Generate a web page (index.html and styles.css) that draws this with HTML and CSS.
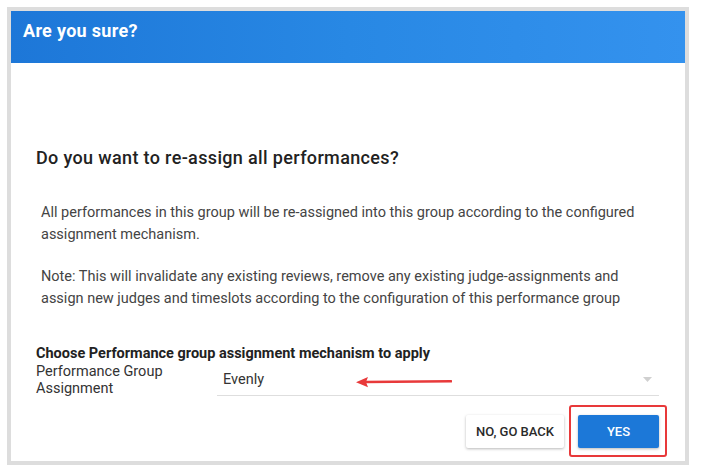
FILE: index.html
```html
<!DOCTYPE html>
<html>
<head>
<meta charset="utf-8">
<link rel="stylesheet" href="styles.css">
</head>
<body>
<div class="frame">
  <div class="header"><span class="title">Are you sure?</span></div>
  <div class="content">
    <h2 class="question">Do you want to re-assign all performances?</h2>
    <div class="info">
      <p class="para">All performances in this group will be re-assigned into this group according to the configured assignment mechanism.</p>
      <p class="para">Note: This will invalidate any existing reviews, remove any existing judge-assignments and assign new judges and timeslots according to the configuration of this performance group</p>
    </div>
    <div class="choose">Choose Performance group assignment mechanism to apply</div>
    <div class="field">
      <div class="field-label">Performance Group Assignment</div>
      <div class="select">
        <span class="select-value">Evenly</span>
        <svg class="caret" width="9" height="5" viewBox="0 0 9 5"><path d="M0 0 L9 0 L4.5 5 Z" fill="#d0d0d0"/></svg>
        <svg class="annot-arrow" width="96" height="12" viewBox="0 0 96 12"><path d="M9 6 L95 5.2" stroke="#e8393a" stroke-width="2.6" stroke-linecap="round" fill="none"/><path d="M0 6.2 L12 1 L10 6 L12 11.2 Z" fill="#e8393a"/></svg>
      </div>
    </div>
    <div class="actions">
      <button class="btn btn-back">NO, GO BACK</button>
      <button class="btn btn-yes">YES</button>
    </div>
  </div>
</div>
</body>
</html>
```

FILE: styles.css
```css
html, body {
  margin: 0;
  padding: 0;
  background: #ffffff;
}
body {
  font-family: Roboto, "Liberation Sans", sans-serif;
}
.frame {
  margin: 7px 0 0 7px;
  width: 682px;
  height: 458px;
  box-sizing: border-box;
  border: 4px solid #dddddd;
  background: #ffffff;
  display: flex;
  flex-direction: column;
}
.header {
  height: 52px;
  box-sizing: border-box;
  padding: 10px 0 0 12px;
  background: linear-gradient(90deg, #1d77d8 0%, #2888e4 50%, #3492ee 100%);
}
.title {
  display: block;
  color: #ffffff;
  font-size: 18px;
  font-weight: 700;
  line-height: 20px;
  letter-spacing: 0.3px;
}
.content {
  padding: 0 26px 0 25px;
}
.question {
  margin: 85px 0 0 0;
  font-size: 18px;
  font-weight: 500;
  line-height: 20px;
  letter-spacing: 0.35px;
  color: #222222;
}
.info {
  margin: 34px 0 0 5px;
}
.para {
  margin: 0 0 20px 0;
  font-size: 14.5px;
  line-height: 22px;
  color: #444444;
}
.para:last-child {
  margin-bottom: 0;
}
.choose {
  margin-top: 35px;
  font-size: 14.5px;
  font-weight: 700;
  line-height: 18px;
  color: #222222;
}
.field {
  display: grid;
  grid-template-columns: 181px 1fr;
  align-items: start;
}
.field-label {
  max-width: 140px;
  font-size: 14.5px;
  line-height: 17px;
  color: #333333;
  padding-top: 0;
}
.select {
  position: relative;
  height: 33px;
  box-sizing: border-box;
  border-bottom: 1px solid #dedede;
  display: flex;
  align-items: center;
  justify-content: space-between;
  padding: 0 7px 0 6px;
}
.select-value {
  font-size: 14.5px;
  color: #333333;
  line-height: 17px;
  padding-top: 1px;
}
.caret {
  display: block;
}
.annot-arrow {
  position: absolute;
  left: 139px;
  top: 13px;
}
.actions {
  margin-top: 18px;
  display: flex;
  justify-content: flex-end;
  gap: 14px;
}
.btn {
  height: 33px;
  border: none;
  border-radius: 2px;
  font-family: Roboto, "Liberation Sans", sans-serif;
  font-size: 13px;
  font-weight: 500;
  padding: 0;
  cursor: pointer;
}
.btn-back {
  width: 98px;
  background: #ffffff;
  color: #2a2a2a;
  box-shadow: 0 1px 3px rgba(0, 0, 0, 0.28);
}
.btn-yes {
  position: relative;
  width: 81px;
  background: #1c78d8;
  color: #ffffff;
  box-shadow: 0 1px 3px rgba(0, 0, 0, 0.28);
}
.btn-yes::after {
  content: "";
  position: absolute;
  left: -9px;
  right: -8px;
  top: -10px;
  bottom: -9px;
  border: 2px solid #e8393a;
  border-radius: 3px;
}
```
